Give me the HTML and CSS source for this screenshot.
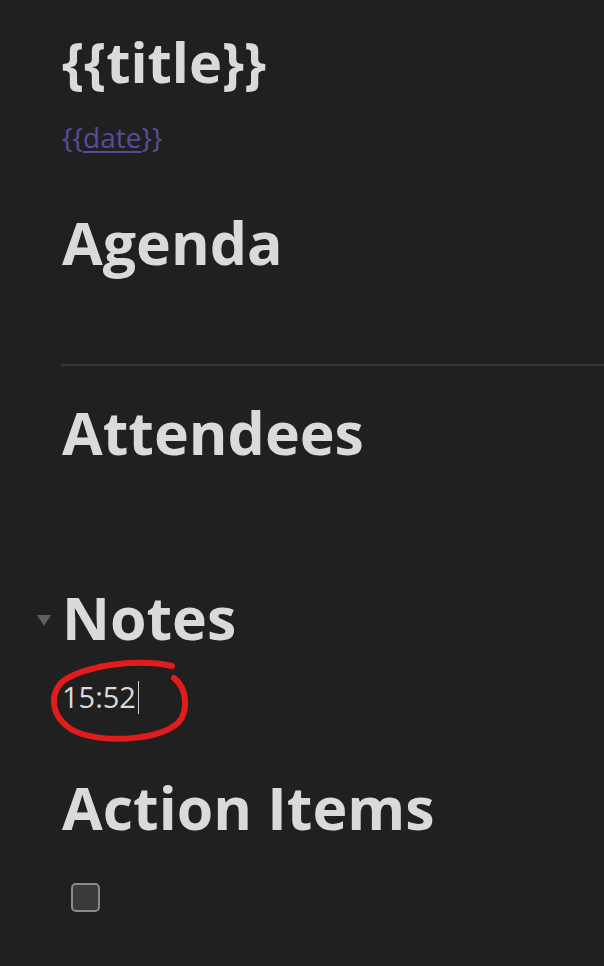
FILE: index.html
```html
<!DOCTYPE html>
<html>
<head>
<meta charset="utf-8">
<link rel="stylesheet" href="styles.css">
</head>
<body>
<main class="page">
  <h1 class="title">{{title}}</h1>
  <p class="date">{{<span class="link">date</span>}}</p>
  <h2 class="heading agenda">Agenda</h2>
  <hr class="rule">
  <h2 class="heading attendees">Attendees</h2>
  <h2 class="heading notes"><span class="fold"></span>Notes</h2>
  <p class="time">15:52<span class="caret"></span></p>
  <h2 class="heading actions">Action Items</h2>
  <div class="task"><span class="checkbox"></span></div>
  <svg class="scribble" viewBox="0 0 604 966" width="604" height="966">
    <path d="M172 666 C 140 659, 92 664, 66 679 C 47 691, 49 723, 82 734 C 112 743, 160 739, 178 723 C 189 711, 187 688, 174 678" fill="none" stroke="#e01c1c" stroke-width="6" stroke-linecap="round"/>
  </svg>
</main>
</body>
</html>
```

FILE: styles.css
```css
html, body {
  margin: 0;
  padding: 0;
  background: #202020;
}
.page {
  position: relative;
  width: 604px;
  height: 966px;
  overflow: hidden;
  padding: 28px 0 0 62px;
  box-sizing: border-box;
  font-family: "Open Sans", "Noto Sans", sans-serif;
  color: #dadada;
}
.title {
  margin: 0;
  font-size: 56px;
  line-height: 66px;
  font-weight: 700;
}
.date {
  margin: 23px 0 0;
  font-size: 28px;
  line-height: 40px;
  color: #5a4c9c;
}
.link {
  text-decoration: underline;
  text-decoration-thickness: 2px;
  text-underline-offset: 3px;
}
.heading {
  position: relative;
  margin: 0;
  font-size: 59px;
  line-height: 70px;
  font-weight: 700;
}
.agenda { margin-top: 50px; }
.rule {
  margin: 87px -10px 0 -1px;
  border: 0;
  height: 2px;
  background: #363636;
}
.attendees { margin-top: 31px; }
.notes { margin-top: 115px; }
.fold {
  position: absolute;
  left: -25px;
  top: 33px;
  width: 0;
  height: 0;
  border-left: 7.5px solid transparent;
  border-right: 7.5px solid transparent;
  border-top: 11px solid #5e5e5e;
}
.time {
  margin: 24px 0 0;
  font-size: 29px;
  line-height: 42px;
  font-weight: 400;
}
.caret {
  display: inline-block;
  width: 1px;
  height: 33px;
  margin-left: 2px;
  vertical-align: -6px;
  background: #cfcfcf;
}
.actions { margin-top: 54px; }
.task {
  margin-top: 41px;
  padding-left: 9px;
}
.checkbox {
  display: block;
  width: 25px;
  height: 25px;
  border: 2px solid #8a8a8a;
  border-radius: 5px;
  background: #3a3a3a;
}
.scribble {
  position: absolute;
  left: 0;
  top: 0;
  pointer-events: none;
}
```
